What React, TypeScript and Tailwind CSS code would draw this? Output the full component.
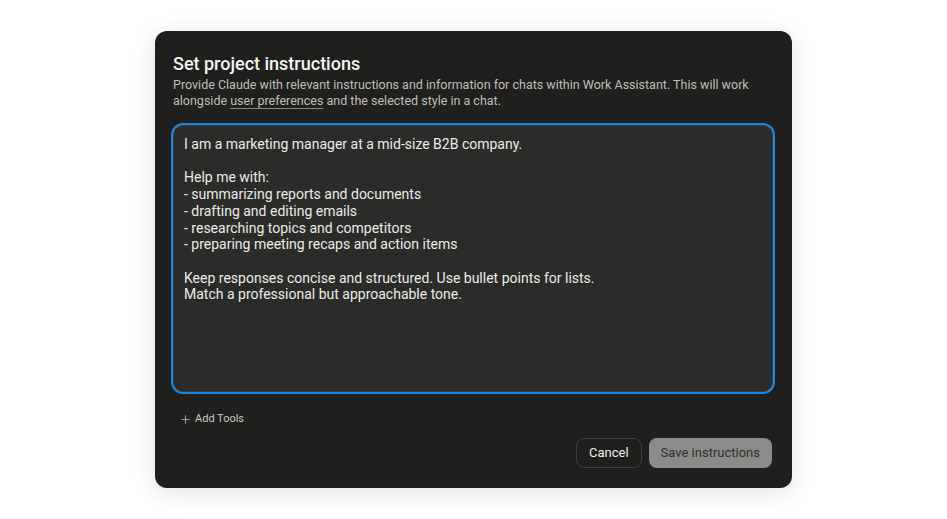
import { Plus } from "lucide-react";

const INSTRUCTIONS = `I am a marketing manager at a mid-size B2B company.

Help me with:
- summarizing reports and documents
- drafting and editing emails
- researching topics and competitors
- preparing meeting recaps and action items

Keep responses concise and structured. Use bullet points for lists.
Match a professional but approachable tone.`;

const FONT = "Roboto, 'Noto Sans', sans-serif";

export default function App() {
  return (
    <div
      className="flex min-h-[519px] w-full items-start justify-center bg-white pt-[31px]"
      style={{ fontFamily: FONT }}
    >
      <div className="flex h-[457px] w-[637px] flex-col rounded-[12px] bg-[#1f1f1e] px-4 pt-[22px] shadow-[0_4px_24px_rgba(0,0,0,0.12)]">
        <h2 className="px-[2px] text-[18px] font-medium leading-[22px] text-[#f5f4f0]">
          Set project instructions
        </h2>
        <p className="mt-[2px] px-[2px] text-[12.5px] leading-[16px] text-[#c0beb6]">
          Provide Claude with relevant instructions and information for chats within Work Assistant. This will work
          alongside{" "}
          <span className="underline decoration-[#8a8880] underline-offset-[3px]">user preferences</span> and the
          selected style in a chat.
        </p>

        <div className="ml-[2px] mt-[16px] h-[267px] w-[600px] rounded-[10px] border border-[#3d3d3b] bg-[#2b2b2a] shadow-[0_0_0_2px_#1a86e0]">
          <textarea
            readOnly
            defaultValue={INSTRUCTIONS}
            className="h-full w-full resize-none bg-transparent px-[10px] pt-[10px] text-[14px] leading-[16.7px] text-[#ecebe6] outline-none"
            style={{ fontFamily: FONT }}
          />
        </div>

        <button
          type="button"
          className="mt-[19px] flex w-fit items-center gap-[3px] pl-[8px] text-[11px] text-[#c9c7bf]"
        >
          <Plus size={13} strokeWidth={1.4} />
          Add Tools
        </button>

        <div className="mt-[10px] flex justify-end gap-[7px] pr-[4px]">
          <button
            type="button"
            className="h-[30px] rounded-[8px] border border-[#3e3e3c] px-[12px] text-[13px] text-[#f0efea]"
          >
            Cancel
          </button>
          <button
            type="button"
            className="h-[30px] rounded-[8px] bg-[#8b8b89] px-[12px] text-[13px] text-[#2f2f2e]"
          >
            Save instructions
          </button>
        </div>
      </div>
    </div>
  );
}
